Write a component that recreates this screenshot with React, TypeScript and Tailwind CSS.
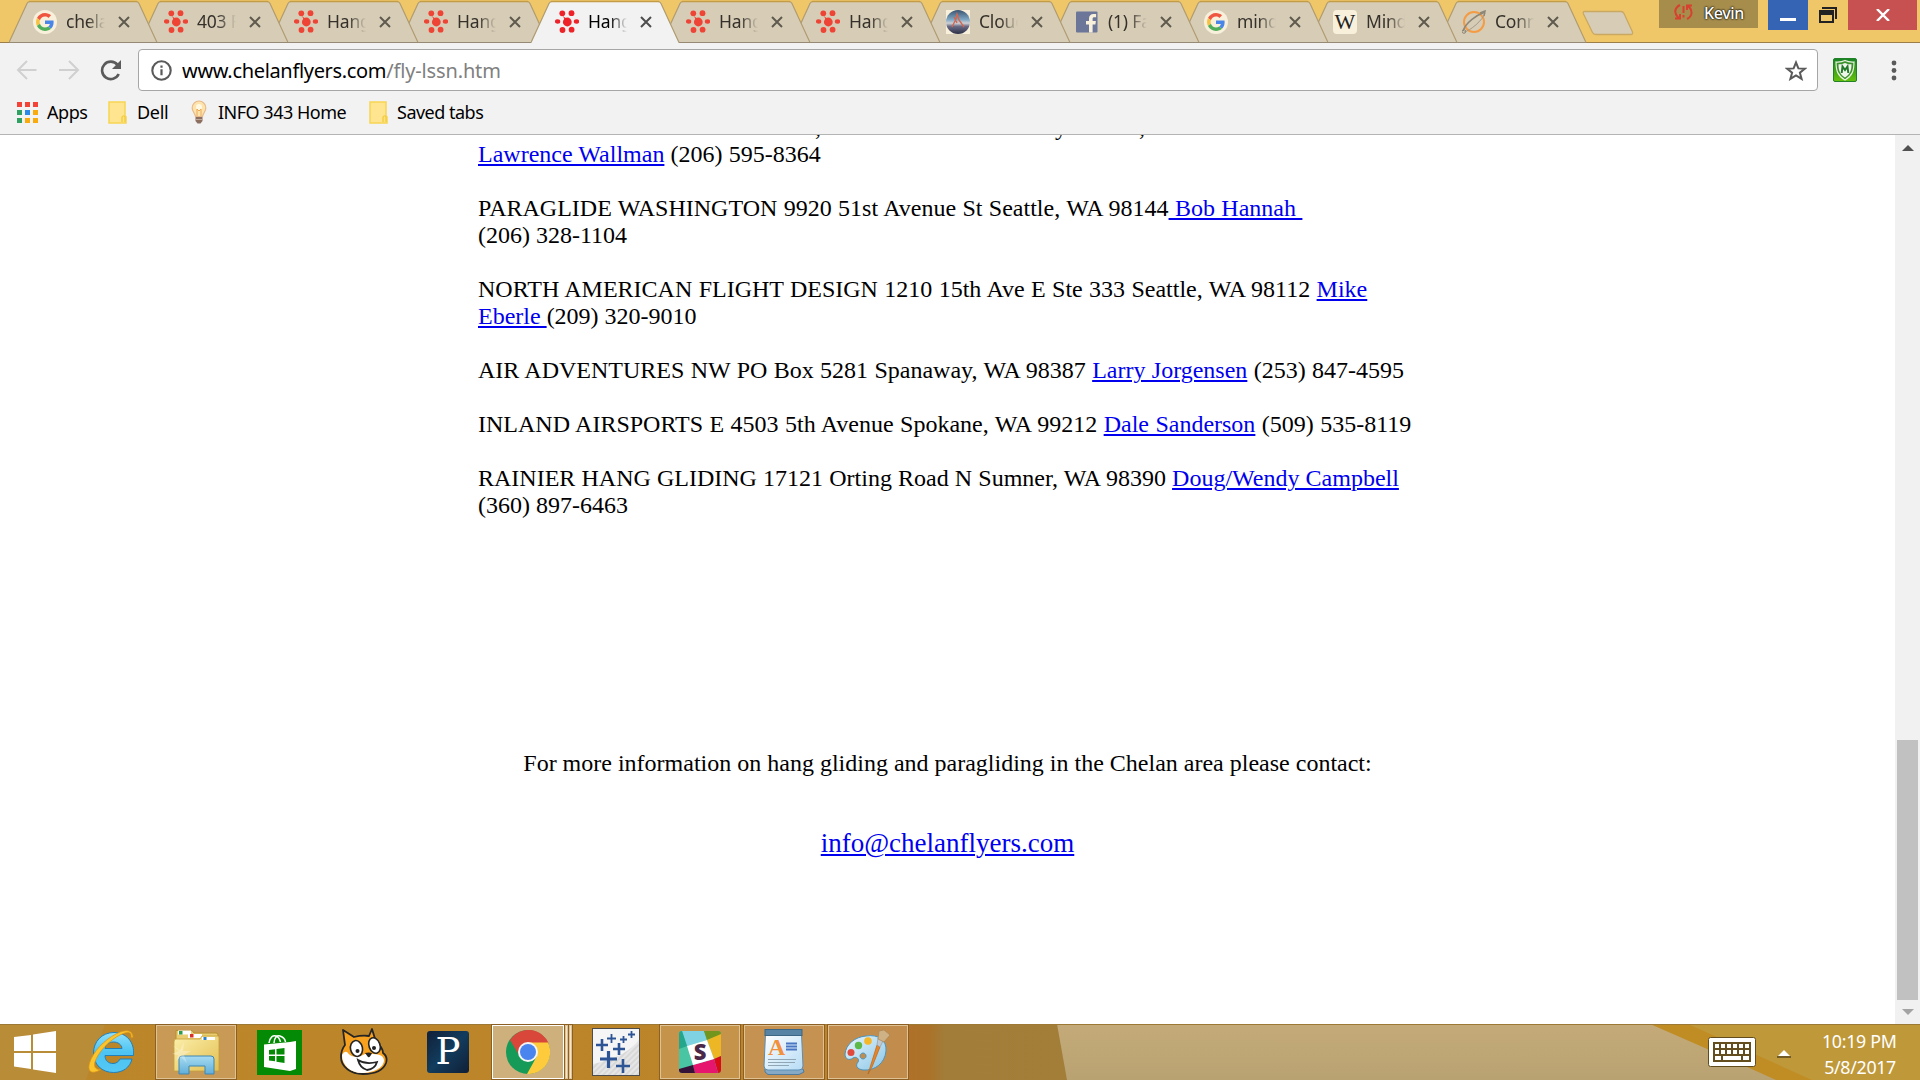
import React from "react";

const UI = "font-['Noto_Sans',sans-serif]";

function GoogleG({ size = 18 }: { size?: number }) {
  return (
    <svg width={size} height={size} viewBox="0 0 48 48">
      <path fill="#f0563f" d="M24 9.500c3.540 0 6.710 1.220 9.210 3.600l6.850-6.850C35.900 2.380 30.470 0 24 0 14.620 0 6.510 5.380 2.560 13.220l7.980 6.190C12.430 13.720 17.740 9.500 24 9.500z" />
      <path fill="#4a86e8" d="M46.980 24.550c0-1.570-.15-3.090-.38-4.550H24v9.020h12.940c-.58 2.960-2.260 5.480-4.780 7.180l7.730 6c4.510-4.180 7.090-10.360 7.090-17.650z" />
      <path fill="#f7c244" d="M10.530 28.590c-.48-1.450-.76-2.990-.76-4.590s.27-3.140.76-4.590l-7.980-6.190C.92 16.460 0 20.120 0 24c0 3.880.92 7.540 2.560 10.780l7.970-6.190z" />
      <path fill="#4fae5a" d="M24 48c6.480 0 11.930-2.130 15.890-5.810l-7.730-6c-2.150 1.450-4.920 2.300-8.160 2.300-6.260 0-11.570-4.220-13.470-9.910l-7.980 6.190C6.510 42.620 14.620 48 24 48z" />
    </svg>
  );
}

type IconKind = "google" | "dots" | "cloud" | "facebook" | "wiki" | "planet";

function Favicon({ kind, bright }: { kind: IconKind; bright?: boolean }) {
  if (kind === "google")
    return (
      <div className="flex size-6 items-center justify-center rounded-full bg-[#f9f0dc]">
        <GoogleG />
      </div>
    );
  if (kind === "dots") {
    const c = bright ? "#ee2229" : "#ee4436";
    return (
      <svg width="24" height="24" viewBox="0 0 24 24" fill={c}>
        <circle cx="12.300" cy="12" r="4.400" />
        <path d="M8 6l6 5-3 2z" />
        <circle cx="7.300" cy="3.300" r="2.900" />
        <circle cx="16.500" cy="3.200" r="2.900" />
        <ellipse cx="2.600" cy="11.500" rx="2.700" ry="2.200" />
        <ellipse cx="21.500" cy="11.500" rx="2.700" ry="2.200" />
        <circle cx="7.500" cy="20" r="2.900" />
        <circle cx="16.600" cy="19.700" r="2.900" />
      </svg>
    );
  }
  if (kind === "cloud")
    return (
      <svg width="24" height="24" viewBox="0 0 24 24">
        <rect width="24" height="24" fill="#f9f0dc" />
        <defs>
          <clipPath id="cl"><circle cx="12" cy="12" r="12" /></clipPath>
          <linearGradient id="clg" x1="0" y1="0" x2="0" y2="1">
            <stop offset="0" stopColor="#39536f" />
            <stop offset=".4" stopColor="#7fa8c4" />
            <stop offset=".55" stopColor="#cfd0d4" />
            <stop offset=".68" stopColor="#6a6c86" />
            <stop offset="1" stopColor="#2b2f45" />
          </linearGradient>
        </defs>
        <g clipPath="url(#cl)">
          <rect width="24" height="24" fill="url(#clg)" />
          <path d="M6 17l4-8 1-5 2 6 5 7M8 7l3 6" stroke="#d3664f" strokeWidth="1.300" fill="none" />
        </g>
      </svg>
    );
  if (kind === "facebook")
    return (
      <svg width="24" height="24" viewBox="0 0 24 24">
        <rect x="1" y="1.500" width="21.500" height="21" rx="1" fill="#6b7699" />
        <path fill="#f9f0dc" d="M14 22.500v-8h-3v-3.400h3V8.500c0-3 1.800-4.600 4.500-4.600 1.200 0 2.300.1 2.600.2v3.100h-1.800c-1.400 0-1.700.7-1.700 1.700v2.200h3.300l-.5 3.400h-2.800v8z" />
      </svg>
    );
  if (kind === "wiki")
    return (
      <div className="flex size-6 items-center justify-center rounded-[4px] bg-[#f9f0dc] font-['Liberation_Serif',serif] text-[22px] leading-none text-[#222]">
        W
      </div>
    );
  return (
    <svg width="24" height="24" viewBox="0 0 24 24" fill="none">
      <circle cx="12" cy="12" r="10" stroke="#f49c45" strokeWidth="2" />
      <path d="M1 21C4 12 15 5 22 2.500" stroke="#8d8676" strokeWidth="1.500" />
      <path d="M23 3C21 10 8 21 2 22" stroke="#a39b88" strokeWidth="1" />
      <circle cx="2" cy="21.500" r="1.800" stroke="#8d8676" />
      <path d="M18 3l5-2-1 5" stroke="#8d8676" strokeWidth="1.500" />
    </svg>
  );
}

const TABS: { w: string; z: string; icon: IconKind; text: string; active?: boolean }[] = [
  { w: "w-[131px]", z: "z-[12]", icon: "google", text: "chelan" },
  { w: "w-[130px]", z: "z-[11]", icon: "dots", text: "403 Fo" },
  { w: "w-[130px]", z: "z-[10]", icon: "dots", text: "Hang" },
  { w: "w-[131px]", z: "z-[9]", icon: "dots", text: "Hang" },
  { w: "w-[131px]", z: "z-[20]", icon: "dots", text: "Hang", active: true },
  { w: "w-[130px]", z: "z-[7]", icon: "dots", text: "Hang" },
  { w: "w-[130px]", z: "z-[6]", icon: "dots", text: "Hang" },
  { w: "w-[129px]", z: "z-[5]", icon: "cloud", text: "Cloud" },
  { w: "w-[129px]", z: "z-[4]", icon: "facebook", text: "(1) Fa" },
  { w: "w-[129px]", z: "z-[3]", icon: "google", text: "mind" },
  { w: "w-[129px]", z: "z-[2]", icon: "wiki", text: "Mind" },
  { w: "w-[129px]", z: "z-[1]", icon: "planet", text: "Conn" },
];

function Tab({ t }: { t: (typeof TABS)[number] }) {
  return (
    <div className={`relative h-[43px] shrink-0 ${t.w} ${t.z}`}>
      <svg className="absolute left-0 top-0" width="150" height="43" viewBox="0 0 150 43">
        <path
          d="M0 43L18 3.500Q19 1.500 21 1.500H127Q129 1.500 130 3.500L148 43z"
          fill={t.active ? "#f2f2f2" : "#d7cdb7"}
        />
        <path d="M0 42.500L18 3.500Q19 1.500 21 1.500H127Q129 1.500 130 3.500L148 42.500" fill="none" stroke="#b09c71" strokeWidth="1.200" />
        <path d="M20 1.500H128" stroke="#c39c48" strokeWidth="1.500" />
        {!t.active && <path d="M0 42.500H148" stroke="#968a74" />}
      </svg>
      <div className="relative flex h-[43px] w-[148px] items-center pl-6">
        <Favicon kind={t.icon} bright={t.active} />
        <div
          className={`-mt-[1px] ml-[9px] h-6 w-[39px] overflow-hidden whitespace-nowrap text-[17.500px] leading-6 tracking-[-0.2px] [mask-image:linear-gradient(to_right,black_55%,transparent)] ${UI} ${t.active ? "text-black" : "text-[#35312a]"}`}
        >
          {t.text}
        </div>
        <svg className="ml-[13px]" width="12" height="12" viewBox="0 0 12 12" stroke={t.active ? "#4d4d4d" : "#5f5a4d"} strokeWidth="2">
          <path d="M1 1L11 11M11 1L1 11" />
        </svg>
      </div>
    </div>
  );
}

function TabStrip() {
  return (
    <div className="flex h-[43px] border-b border-[#9c7f48] bg-[#f0c768] pl-[9px]">
      {TABS.map((t, i) => (
        <Tab key={i} t={t} />
      ))}
      <svg className="ml-[15px] mt-[10px] shrink-0" width="52" height="26" viewBox="0 0 52 26">
        <path d="M2.500 1.500H39Q41 1.500 42 3.500L50.500 22Q51 24.500 49 24.500H14Q11.500 24.500 10.500 22.500L1.500 4Q.5 1.500 2.500 1.500z" fill="#d7cdb7" stroke="#c9a961" strokeWidth="1.300" />
      </svg>
      <div className="ml-[25px] flex h-7 w-[99px] shrink-0 items-center bg-[#a68d4c] pl-[15px]">
        <svg className="-mt-[4px]" width="19" height="18" viewBox="0 0 19 18" fill="none" stroke="#d8402f" strokeWidth="2">
          <path d="M6 2C.5 5-.5 10 4.500 15M1 15.500h5V11M13 16c5.500-3 6-8 1.500-13M18 2.500h-5V7" />
          <path d="M9.500 3v7M9.500 12v2.500" />
        </svg>
        <span className={`-mt-[2px] ml-[11px] text-[16px] font-medium leading-none text-white [text-shadow:0_0_2px_#000,0_0_2px_#000] tracking-[-0.4px] ${UI}`}>Kevin</span>
      </div>
      <div className="ml-[10px] flex h-[30px] w-10 shrink-0 justify-center bg-[#3664b4] pt-[18px]">
        <div className="h-[3px] w-4 bg-white" />
      </div>
      <svg className="mx-[11px] mt-[7px] shrink-0" width="18" height="16" viewBox="0 0 18 16">
        <path d="M3 0H18V12H16V2H3z" fill="#222" />
        <path fillRule="evenodd" d="M0 3H15V16H0zM2 8V14H13V8z" fill="#222" />
      </svg>
      <div className="flex h-[30px] w-[69px] shrink-0 items-center justify-center bg-[#c75050]">
        <svg width="14" height="12" viewBox="0 0 14 12" stroke="#fff" strokeWidth="2.400">
          <path d="M1 0L13 12M13 0L1 12" />
        </svg>
      </div>
    </div>
  );
}

function Toolbar() {
  return (
    <div className="flex h-[49px] items-start bg-[#f2f2f2] pt-[6px]">
      <svg className="ml-4 mt-[11px] shrink-0" width="21" height="20" viewBox="0 0 21 20" fill="none" stroke="#d0d0d0" strokeWidth="2">
        <path d="M20.500 10H2M11 1L2 10l9 9" />
      </svg>
      <svg className="ml-[22px] mt-[11px] shrink-0" width="21" height="20" viewBox="0 0 21 20" fill="none" stroke="#d0d0d0" strokeWidth="2">
        <path d="M0 10H19M10 1l9 9-9 9" />
      </svg>
      <svg className="ml-[20px] mt-[11px] shrink-0" width="22" height="21" viewBox="0 0 22 21">
        <path d="M17.500 4.800A8.700 8.700 0 1 0 18.700 14" fill="none" stroke="#5a5a5a" strokeWidth="2.600" />
        <path d="M21 0V9H12z" fill="#5a5a5a" />
      </svg>
      <div className="ml-[16px] flex h-[42px] w-[1680px] shrink-0 items-center rounded-[4px] border border-[#a6a6a6] bg-white">
        <svg className="ml-3" width="21" height="21" viewBox="0 0 21 21">
          <circle cx="10.500" cy="10.500" r="9.200" fill="none" stroke="#5a5a5a" strokeWidth="2.100" />
          <path d="M10.500 9.200v6M10.500 5.500v2.200" stroke="#5a5a5a" strokeWidth="2.200" />
        </svg>
        <span className={`ml-[10px] whitespace-nowrap pt-[1px] text-[20px] leading-none text-black ${UI}`}>
          <span className="tracking-[-0.33px]">www.chelanflyers.com</span>
          <span className="tracking-[-0.15px] text-[#808080]">/fly-lssn.htm</span>
        </span>
        <svg className="ml-auto mr-[10px]" width="22" height="21" viewBox="0 0 22 21">
          <path d="M11 2.500L13.400 8.400 19.800 8.700 14.900 12.700 16.600 18.900 11 15.400 5.400 18.900 7.100 12.700 2.200 8.700 8.600 8.400z" fill="none" stroke="#5a5a5a" strokeWidth="2" />
        </svg>
      </div>
      <svg className="ml-[15px] mt-[9px] shrink-0" width="24" height="24" viewBox="0 0 24 24">
        <defs>
          <linearGradient id="mc" x1="0" y1="0" x2="0" y2="1">
            <stop offset="0" stopColor="#168226" /><stop offset="1" stopColor="#66c20c" />
          </linearGradient>
        </defs>
        <rect x=".5" y=".5" width="23" height="23" rx="1.500" fill="url(#mc)" stroke="#238127" />
        <path d="M12 2.500c3 1.500 6 1.700 9 1.500 0 9-2 14-9 18C5 18 3 13 3 4c3 .2 6 0 9-1.500z" fill="#3b922c" stroke="#e8f2df" strokeWidth="1.200" />
        <path d="M12 5c2 1 4.500 1.300 6.500 1.200 0 6-1.500 10-6.500 13.300-5-3.300-6.500-7.300-6.500-13.300C7.500 6.300 10 6 12 5z" fill="#f0f5ec" />
        <path d="M8.700 15L9.500 8.500 12 12l2.500-3.500.8 6.500" fill="none" stroke="#23792a" strokeWidth="2" />
      </svg>
      <svg className="ml-[34px] mt-[11px] shrink-0" width="6" height="21" viewBox="0 0 6 21" fill="#5a5a5a">
        <circle cx="3" cy="3" r="2.400" /><circle cx="3" cy="10.500" r="2.400" /><circle cx="3" cy="18" r="2.400" />
      </svg>
    </div>
  );
}

function Folder() {
  return (
    <svg width="19" height="23" viewBox="0 0 19 23">
      <path d="M1 1H17V14.500L18 16V22H1z" fill="#ffe58f" stroke="#f7d554" strokeWidth="1.500" />
      <path d="M14 21V16q1.500-2.500 3 0V21" fill="#ffe37b" stroke="#f1c93b" strokeWidth="1.200" />
    </svg>
  );
}

function Bookmarks() {
  const c = ["#f44336", "#f44336", "#f44336", "#31a063", "#2b8ae8", "#f9ab0d", "#31a063", "#f9ab0d", "#f9ab0d"];
  return (
    <div className={`flex h-[43px] items-center border-b border-[#b4b4b4] bg-[#f2f2f2] pb-[2px] pl-[17px] text-[18px] leading-none text-black ${UI}`}>
      <div className="grid grid-cols-[5px_5px_5px] gap-[3px]">
        {c.map((x, i) => (
          <div key={i} className="size-[5px]" style={{ background: x }} />
        ))}
      </div>
      <span className="ml-[9px] w-[42px] whitespace-nowrap tracking-[-0.45px]">Apps</span>
      <div className="ml-[19px]"><Folder /></div>
      <span className="ml-[10px] w-[31px] whitespace-nowrap tracking-[-0.3px]">Dell</span>
      <svg className="ml-[23px]" width="16" height="24" viewBox="0 0 16 24">
        <path d="M8 1a6.800 6.800 0 0 1 6.800 7c0 4-2.800 5-3.300 8.500h-7C4 13 1.200 12 1.200 8A6.800 6.800 0 0 1 8 1z" fill="#ffe3ad" stroke="#e6b98a" strokeWidth="1.200" />
        <circle cx="8" cy="7" r="3" fill="#fff9e4" />
        <path d="M6 16V9l2 2 2-2v7" fill="none" stroke="#eaa95a" />
        <path d="M4.500 17h7v4l-2 2.500h-3l-2-2.500z" fill="#8d6f5f" />
        <path d="M4.500 19.500h7" stroke="#c0a99a" />
      </svg>
      <span className="ml-[11px] w-[130px] whitespace-nowrap tracking-[-0.5px]">INFO 343 Home</span>
      <div className="ml-[21px]"><Folder /></div>
      <span className="ml-[9px] whitespace-nowrap tracking-[-0.5px]">Saved tabs</span>
    </div>
  );
}

function Link({ children }: { children: React.ReactNode }) {
  return <a className="whitespace-pre-wrap text-[#0000ee] underline decoration-[2px] underline-offset-[2px]">{children}</a>;
}

function Page() {
  return (
    <div className="flex h-[889px] bg-white">
      <div className="relative h-full grow overflow-hidden font-['Liberation_Serif',serif] text-[24px] leading-[27px] text-black">
        <span className="absolute left-[815px] top-[-21px]">,</span>
        <span className="absolute left-[1055px] top-[-21px]">y</span>
        <span className="absolute left-[1139px] top-[-21px]">,</span>
        <div className="ml-[478px] flex w-[940px] flex-col gap-[27px] pt-[6px]">
          <p className="[word-spacing:0.2px]"><Link>Lawrence Wallman</Link> (206) 595-8364</p>
          <p><span className="[word-spacing:0.4px]">PARAGLIDE WASHINGTON 9920 51st Avenue St Seattle, WA 98144<Link> Bob Hannah </Link></span><br />(206) 328-1104</p>
          <p><span className="[word-spacing:0.38px]">NORTH AMERICAN FLIGHT DESIGN 1210 15th Ave E Ste 333 Seattle, WA 98112 </span><Link>Mike<br />Eberle </Link>(209) 320-9010</p>
          <p className="[word-spacing:0.36px]">AIR ADVENTURES NW PO Box 5281 Spanaway, WA 98387 <Link>Larry Jorgensen</Link> (253) 847-4595</p>
          <p className="[word-spacing:0.44px]">INLAND AIRSPORTS E 4503 5th Avenue Spokane, WA 99212 <Link>Dale Sanderson</Link> (509) 535-8119</p>
          <p><span className="[word-spacing:0.15px]">RAINIER HANG GLIDING 17121 Orting Road N Sumner, WA 98390 <Link>Doug/Wendy Campbell</Link></span><br />(360) 897-6463</p>
        </div>
        <div className="mt-[231px] text-center">
          <p>For more information on hang gliding and paragliding in the Chelan area please contact:</p>
          <p className="mt-[51px] text-[27px] leading-[31px]"><Link>info@chelanflyers.com</Link></p>
        </div>
      </div>
      <div className="flex w-[25px] shrink-0 flex-col items-center bg-[#f1f1f1]">
        <svg className="mt-[10px]" width="12" height="6" viewBox="0 0 12 6"><path d="M0 6L6 0l6 6z" fill="#505050" /></svg>
        <div className="mt-[589px] h-[260px] w-[21px] bg-[#c1c1c1]" />
        <svg className="mt-[9px]" width="12" height="6" viewBox="0 0 12 6"><path d="M0 0L6 6l6-6z" fill="#a3a3a3" /></svg>
      </div>
    </div>
  );
}

function IE() {
  return (
    <svg width="46" height="46" viewBox="0 0 46 46">
      <defs>
        <linearGradient id="ie" x1="0" y1="0" x2="0" y2="1"><stop offset="0" stopColor="#8fe0fb" /><stop offset=".5" stopColor="#4cc3f2" /><stop offset="1" stopColor="#54c8f5" /></linearGradient>
      </defs>
      <path d="M44 31H32c-1.500 3-4 4.500-7 4.500-4.500 0-8-3-8-8h28.500C47 14 38 4.500 26 4.500 14 4.500 5.500 13.500 5.500 25S14 44.500 25.500 44.500C35 44.500 42 39.500 44 31zM17 20.500c.5-4 4-6.500 8.500-6.500s8 2.500 8.500 6.500z" fill="url(#ie)" stroke="#237fb8" strokeWidth="1" />
      <path d="M45 9.500C45 2 38 .5 28 6 16 12 5 24 1.500 35 -.5 42 2 46 9 43.500l4-2C8 42 5.500 39.500 7 34 10 24 22 11.500 33 6.500 40 3 44 4 43 9.500z" fill="#fcc52c" stroke="#d8931a" strokeWidth=".8" />
    </svg>
  );
}

function Explorer() {
  return (
    <svg width="48" height="46" viewBox="0 0 48 46">
      <defs>
        <linearGradient id="ex" x1="0" y1="0" x2="1" y2="1"><stop offset="0" stopColor="#fcf0ac" /><stop offset="1" stopColor="#e3bf52" /></linearGradient>
        <linearGradient id="eb" x1="0" y1="0" x2="0" y2="1"><stop offset="0" stopColor="#a7dcf1" /><stop offset="1" stopColor="#60aeda" /></linearGradient>
      </defs>
      <path d="M4 10V1.500h16L22 4h22q2 0 2 2v6" fill="#e9cd70" stroke="#b48f30" />
      <rect x="6" y="1.500" width="13" height="4" fill="#fff" /><rect x="7" y="2" width="3.500" height="3.500" fill="#2e9b4b" />
      <rect x="16" y="5" width="14" height="4" fill="#fff" /><rect x="18" y="5" width="3.500" height="3.500" fill="#dd3023" />
      <path d="M2 13q0-3 2-3H28l2-3H46q1 0 1 2V42H2z" fill="url(#ex)" stroke="#c49f3b" strokeWidth=".8" />
      <rect x="30" y="8" width="13" height="3" fill="#fff" /><rect x="31.500" y="8" width="3" height="3" fill="#2b80c9" />
      <path d="M7 30q0-3 3-3H39q3 0 3 3V45H33V37H17v8H7z" fill="url(#eb)" stroke="#3e86b0" />
      <path d="M0 16l8 5 4-8-1 9 8 0-7 4 3 8-6-6-5 4 2-6-6-1 7-3z" fill="#fff" opacity=".3" />
    </svg>
  );
}

function Store() {
  return (
    <svg width="45" height="45" viewBox="0 0 45 45">
      <rect width="45" height="45" fill="#058a05" />
      <path d="M12 13C13 7 16 5 19 6c3 1 4 4 4.500 6M17 13c0-5 3-8 6-7s5 3 5.500 6" stroke="#fff" strokeWidth="1.500" fill="none" />
      <path d="M7 14.500L33 12l6-1v28l-6 2L7 37z" fill="#fff" />
      <path d="M12 20l6-.8v5.300h-6zM19.500 19l8-1v6.500h-8zM12 26h6v5.300l-6-.8zM19.500 26h8v7l-8-1.200z" fill="#058a05" />
    </svg>
  );
}

function Scratch() {
  return (
    <svg width="50" height="48" viewBox="0 0 50 48">
      <path d="M4 2L15 9q8-2 15-1L33 1l4 13c5 4 7 7 7 11 4 3 4 7 3 10-3 8-12 11-23 11C12 46 2 39 2 29q0-7 4-12z" fill="#f7a11f" stroke="#252525" strokeWidth="1.800" strokeLinejoin="round" />
      <path d="M3 27q2-4 5-3c5 7 13 5 18 2 9 0 18-1 19 6 0 8-11 13-22 13C11 45 3 37 3 27z" fill="#fff" />
      <ellipse cx="17.500" cy="20.500" rx="6" ry="8" fill="#fff" stroke="#252525" strokeWidth="1.600" transform="rotate(-12 17.500 20.500)" />
      <ellipse cx="35.500" cy="17.500" rx="5.500" ry="8" fill="#fff" stroke="#252525" strokeWidth="1.600" transform="rotate(-20 35.500 17.500)" />
      <circle cx="18.500" cy="23" r="2" fill="#222" /><circle cx="35" cy="20" r="2" fill="#222" />
      <path d="M26 25q4-1 7 0-2 5-4 4z" fill="#222" />
      <path d="M19 32q8 5 19 2-2 7-10 8-7-2-9-10z" fill="#fff" stroke="#252525" strokeWidth="1.800" />
    </svg>
  );
}

function Chrome() {
  return (
    <svg width="44" height="44" viewBox="0 0 44 44">
      <circle cx="22" cy="22" r="22" fill="#159a58" />
      <path d="M4 10A22 22 0 0 1 43 14L42 13H22L13 25z" fill="#d9473a" />
      <path d="M22 12.500H42A22 22 0 0 1 21 44L31 26z" fill="#fecb3c" />
      <circle cx="22" cy="22" r="10" fill="#f5f5f5" />
      <circle cx="22" cy="22" r="8" fill="#4a84ee" />
    </svg>
  );
}

function Crosses() {
  return (
    <svg width="48" height="48" viewBox="0 0 48 48">
      <defs>
        <pattern id="st" width="4" height="4" patternUnits="userSpaceOnUse" patternTransform="rotate(45)"><rect width="4" height="4" fill="#e6e6e6" /><rect width="2" height="4" fill="#d8d8d8" /></pattern>
      </defs>
      <rect x=".5" y=".5" width="47" height="47" fill="url(#st)" stroke="#4c4c4c" />
      <path d="M1 1H47V12Q34 29 1 36z" fill="#f5f5f5" />
      <g fill="none" stroke="#2d5596">
        <path d="M8 31H25M16.500 23V40" strokeWidth="3.200" />
        <path d="M4 17H16M10 11V23M21 21H33M27 15V27M24 38H38M31 31V45" strokeWidth="2.600" />
        <path d="M15 10.500H24M19.500 6V15M28 11.500H35M31.500 8V15M36 6.500H43M39.500 3V10" strokeWidth="1.800" />
      </g>
    </svg>
  );
}

function Slack() {
  return (
    <svg width="42" height="42" viewBox="0 0 42 42">
      <defs><clipPath id="sl"><rect width="42" height="42" rx="3" /></clipPath></defs>
      <g clipPath="url(#sl)">
        <rect width="42" height="42" fill="#49c5a3" />
        <path d="M3 0H25L28 9 8 15z" fill="#7fd2e1" />
        <path d="M0 0H3L8 15 0 18z" fill="#23a68c" />
        <path d="M25 0H42V4L28 9z" fill="#72951e" />
        <path d="M28 9L42 3V25L35 28z" fill="#edb625" />
        <path d="M35 28l7-3V42H39z" fill="#d90b17" />
        <path d="M14 34L35 28l4 14H16z" fill="#e6166f" />
        <path d="M0 38l14-4 2 8H0z" fill="#371238" />
        <path d="M8 15l20-6 7 19-21 6z" fill="#fff" />
      </g>
      <text x="21" y="29" textAnchor="middle" fontFamily="Open Sans, sans-serif" fontWeight="800" fontSize="22" fill="#4b2748">S</text>
    </svg>
  );
}

function WordPad() {
  return (
    <svg width="42" height="46" viewBox="0 0 42 46">
      <defs><linearGradient id="wp" x1="0" y1="0" x2="1" y2="1"><stop offset="0" stopColor="#fff" /><stop offset="1" stopColor="#b6dcf6" /></linearGradient></defs>
      <path d="M2 40L40 40 41 43 36 45.500H5L2 43z" fill="#86aac6" stroke="#507a9b" />
      <path d="M2.500 5H38.500L40 37q0 4-4 4H5q-4 0-4-4z" fill="url(#wp)" stroke="#5b8db4" />
      <rect x="2" y=".5" width="37" height="6" fill="#5784a5" stroke="#3d6684" />
      <text x="5" y="26" fontFamily="Liberation Serif, serif" fontWeight="700" fontSize="24" fill="#f2913d">A</text>
      <path d="M23 14.500H34M23 17.500H34M23 20.500H34" stroke="#4975c3" strokeWidth="1.800" />
      <path d="M5 30.500H33M5 33.500H32M5 36.500H26" stroke="#91a6b5" strokeWidth="1" />
    </svg>
  );
}

function Paint() {
  return (
    <svg width="48" height="46" viewBox="0 0 48 46">
      <defs><linearGradient id="pt" x1="0" y1="0" x2="1" y2="1"><stop offset="0" stopColor="#e7f5fd" /><stop offset="1" stopColor="#8cc7e7" /></linearGradient></defs>
      <path d="M22 7C34 5 43 11 42 22 41 34 31 42 19 41c-6-1-8-4-5-8 2-3-2-6-5-4-4 3-8 1-8-4C2 15 11 8 22 7zM19 24a3 3 0 1 0 .1 0z" fill="url(#pt)" fillRule="evenodd" stroke="#4d93bb" />
      <circle cx="7" cy="23.500" r="3.500" fill="#e2493d" /><circle cx="14.500" cy="16.500" r="3.700" fill="#5cb947" /><circle cx="24" cy="12" r="3.800" fill="#f6b625" />
      <path d="M33 16l3 2-8 20-4 7z" fill="#ea8526" stroke="#b4651c" strokeWidth=".7" />
      <path d="M34 9l5 3-3 6-3-2z" fill="#c2c9cf" stroke="#89949c" strokeWidth=".6" />
      <path d="M34 10l1-8 5-1 6 5-6 7z" fill="#ceb185" stroke="#a4814f" strokeWidth=".6" />
    </svg>
  );
}

function TaskButton({ children, className }: { children: React.ReactNode; className: string }) {
  return (
    <div className={`flex h-[56px] shrink-0 items-center justify-center border border-[#8c6024] shadow-[inset_0_0_0_1px_#dfc294] ${className}`}>
      {children}
    </div>
  );
}

function Taskbar() {
  return (
    <div className="relative flex h-[56px] items-center overflow-hidden bg-[#bd8728]">
      <svg className="absolute inset-0" width="1920" height="56" viewBox="0 0 1920 56" preserveAspectRatio="none">
        <defs>
          <linearGradient id="tb1"><stop offset="0" stopColor="#bb8629" /><stop offset=".44" stopColor="#bd8429" /><stop offset=".472" stopColor="#b07129" /><stop offset=".484" stopColor="#ab7229" /><stop offset=".492" stopColor="#a17d39" /><stop offset=".56" stopColor="#a37e39" /></linearGradient>
          <linearGradient id="tb2" x1="0" y1="0" x2="0" y2="1"><stop offset="0" stopColor="#c4aa78" /><stop offset="1" stopColor="#b9a272" /></linearGradient>
        </defs>
        <rect width="1920" height="56" fill="url(#tb1)" />
        <path d="M0 0H105L86 56H0z" fill="#b98c38" />
        <path d="M1057 0H1920V56H1067z" fill="url(#tb2)" />
        <path d="M1650 0H1920V56H1776L1705 24z" fill="#c08d25" />
        <path d="M1688 0H1920V56H1812z" fill="#bf983a" />
        <path d="M0 .5H1920" stroke="#9c7a36" />
      </svg>
      <div className="relative flex h-[56px] w-full items-center">
        <svg className="ml-[14px] shrink-0" width="43" height="42" viewBox="0 0 43 42" fill="#fff">
          <path d="M0 6l17-2v16H0zM19 3.500L42 0v20H19zM0 22h17v16L0 35.500zM19 22h23v20l-23-3.500z" />
        </svg>
        <div className="-mt-[2px] ml-[31px] shrink-0"><IE /></div>
        <TaskButton className="ml-[21px] w-[82px] bg-[#c99a56]"><Explorer /></TaskButton>
        <div className="ml-[20px] shrink-0"><Store /></div>
        <div className="ml-[37px] shrink-0"><Scratch /></div>
        <div className="ml-[38px] flex size-[42px] shrink-0 items-center justify-center rounded-[3px] bg-[linear-gradient(135deg,#112039,#123c5d_50%,#101f36)] pb-[1px] font-['DejaVu_Serif',serif] text-[37px] leading-none text-white">
          P
        </div>
        <div className="ml-[22px] flex shrink-0">
          <TaskButton className="w-[74px] bg-[#cdb07b] shadow-[inset_0_0_0_1px_#fff]"><Chrome /></TaskButton>
          <TaskButton className="w-[4px] border-l-0 bg-[#f3e6cf]">{null}</TaskButton>
          <TaskButton className="w-[4px] border-l-0 bg-[#f3e6cf]">{null}</TaskButton>
        </div>
        <div className="ml-[19px] shrink-0"><Crosses /></div>
        <TaskButton className="ml-[19px] w-[82px] bg-[#c6934b]"><Slack /></TaskButton>
        <TaskButton className="ml-[2px] w-[82px] bg-[#c69252]"><WordPad /></TaskButton>
        <TaskButton className="ml-[2px] w-[82px] bg-[#c28c4c]"><Paint /></TaskButton>
        <div className="ml-auto flex items-center pr-[24px]">
          <svg width="48" height="30" viewBox="0 0 48 30">
            <rect x=".5" y=".5" width="47" height="29" rx="2" fill="#fff" stroke="#624c1b" />
            <rect x="5" y="5" width="38" height="20" fill="#654e1d" />
            <g fill="#fff">
              {[7, 13, 19, 25, 31, 37].map((x) => (
                <React.Fragment key={x}>
                  <rect x={x} y="7" width="4" height="4" />
                  <rect x={x} y="13" width="4" height="4" />
                </React.Fragment>
              ))}
              <rect x="7" y="19" width="6" height="4" /><rect x="15" y="19" width="18" height="4" /><rect x="35" y="19" width="6" height="4" />
            </g>
          </svg>
          <svg className="ml-[21px] mt-[2px]" width="14" height="9" viewBox="0 0 14 9"><path d="M1 7L7 1l6 6z" fill="#fff" /><path d="M0 8h14" stroke="#59471f" strokeWidth="1.500" /></svg>
          <div className={`ml-[31px] w-[74px] whitespace-nowrap pt-[3px] text-right text-[17.800px] leading-[26px] tracking-[-0.3px] text-white ${UI}`}>
            <div>10:19 PM</div>
            <div>5/8/2017</div>
          </div>
        </div>
      </div>
    </div>
  );
}

export default function App() {
  return (
    <div className="flex h-[1080px] w-[1920px] flex-col overflow-hidden">
      <TabStrip />
      <Toolbar />
      <Bookmarks />
      <Page />
      <Taskbar />
    </div>
  );
}
